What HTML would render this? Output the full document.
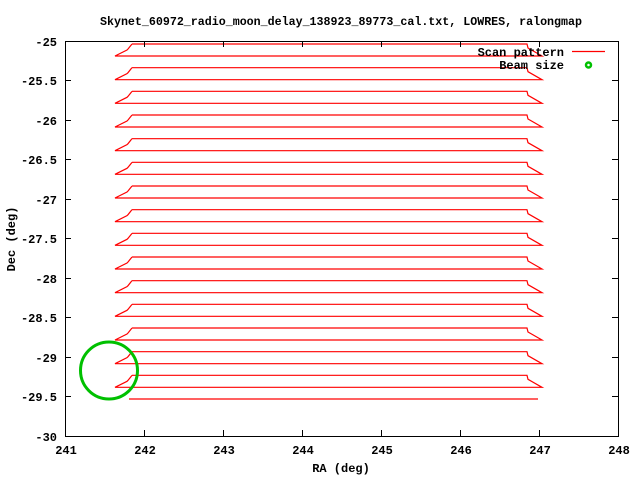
<!DOCTYPE html>
<html><head><meta charset="utf-8"><style>
html,body{margin:0;padding:0;background:#fff;}
svg{display:block;}
text{font-family:"Liberation Mono",monospace;font-weight:bold;font-size:12px;fill:#000;}
</style></head><body>
<svg width="640" height="480" viewBox="0 0 640 480" xmlns="http://www.w3.org/2000/svg">
<defs>
<path id="lp" d="M132,44 H527 L528,48 L542,56 H115 L127,50 L128,49 L132,44" fill="none" stroke="#ff0000" stroke-width="1.2"/>
</defs>
<text x="341" y="25" text-anchor="middle" style="font-size:11.65px">Skynet_60972_radio_moon_delay_138923_89773_cal.txt, LOWRES, ralongmap</text>
<g fill="none" stroke="#ff0000" stroke-width="1.2">
<use href="#lp"/>
<use href="#lp" transform="translate(0,23.67)"/>
<use href="#lp" transform="translate(0,47.33)"/>
<use href="#lp" transform="translate(0,71)"/>
<use href="#lp" transform="translate(0,94.67)"/>
<use href="#lp" transform="translate(0,118.33)"/>
<use href="#lp" transform="translate(0,142)"/>
<use href="#lp" transform="translate(0,165.67)"/>
<use href="#lp" transform="translate(0,189.33)"/>
<use href="#lp" transform="translate(0,213)"/>
<use href="#lp" transform="translate(0,236.67)"/>
<use href="#lp" transform="translate(0,260.33)"/>
<use href="#lp" transform="translate(0,284)"/>
<use href="#lp" transform="translate(0,307.67)"/>
<use href="#lp" transform="translate(0,331.33)"/>
<path d="M129,399 H538"/>
</g>
<rect x="65.5" y="41.5" width="553" height="395" fill="none" stroke="#000" stroke-width="1"/>
<g stroke="#000" stroke-width="1">
<path d="M65,80.5h6M65,120.5h6M65,159.5h6M65,199.5h6M65,238.5h6M65,278.5h6M65,317.5h6M65,357.5h6M65,396.5h6"/>
<path d="M618,80.5h-6M618,120.5h-6M618,159.5h-6M618,199.5h-6M618,238.5h-6M618,278.5h-6M618,317.5h-6M618,357.5h-6M618,396.5h-6"/>
<path d="M144.5,436v-6M223.5,436v-6M302.5,436v-6M381.5,436v-6M460.5,436v-6M539.5,436v-6"/>
<path d="M144.5,41v6M223.5,41v6M302.5,41v6M381.5,41v6M460.5,41v6M539.5,41v6"/>
</g>
<g text-anchor="end">
<text x="57" y="46">-25</text>
<text x="57" y="85">-25.5</text>
<text x="57" y="125">-26</text>
<text x="57" y="164">-26.5</text>
<text x="57" y="204">-27</text>
<text x="57" y="243">-27.5</text>
<text x="57" y="283">-28</text>
<text x="57" y="322">-28.5</text>
<text x="57" y="362">-29</text>
<text x="57" y="401">-29.5</text>
<text x="57" y="441">-30</text>
</g>
<g text-anchor="middle">
<text x="66" y="454">241</text>
<text x="145" y="454">242</text>
<text x="224" y="454">243</text>
<text x="303" y="454">244</text>
<text x="382" y="454">245</text>
<text x="461" y="454">246</text>
<text x="540" y="454">247</text>
<text x="619" y="454">248</text>
<text x="341" y="472">RA (deg)</text>
<text transform="translate(15,239) rotate(-90)">Dec (deg)</text>
</g>
<text x="564" y="56" text-anchor="end">Scan pattern</text>
<path d="M572,51.5H605" stroke="#ff0000" stroke-width="1.2"/>
<text x="564" y="69" text-anchor="end">Beam size</text>
<circle cx="588.5" cy="65" r="2.5" fill="none" stroke="#00c000" stroke-width="2.5"/>
<circle cx="109" cy="370.5" r="28.5" fill="none" stroke="#00c000" stroke-width="3"/>
</svg>
</body></html>
